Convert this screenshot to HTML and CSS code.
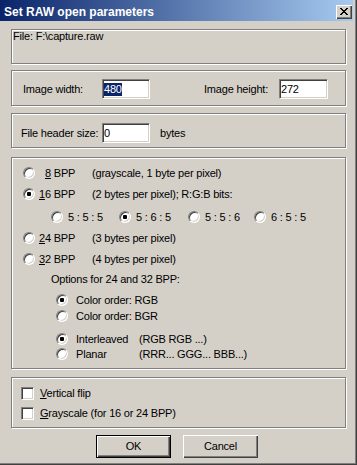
FILE: index.html
```html
<!DOCTYPE html>
<html>
<head>
<meta charset="utf-8">
<link rel="stylesheet" href="styles.css">
</head>
<body>
<div class="window">
  <div class="titlebar">
    <span class="title">Set RAW open parameters</span>
    <span class="close"><svg width="8" height="7" viewBox="0 0 8 7" shape-rendering="crispEdges"><path fill="#000" d="M0 0h2v1H0z M6 0h2v1H6z M1 1h2v1H1z M5 1h2v1H5z M2 2h4v1H2z M3 3h2v1H3z M2 4h4v1H2z M1 5h2v1H1z M5 5h2v1H5z M0 6h2v1H0z M6 6h2v1H6z"/></svg></span>
  </div>

  <div class="group g-file"><span>File: F:\capture.raw</span></div>

  <div class="group g-size">
    <span class="lbl lbl-w">Image width:</span>
    <span class="field"><span class="sel">480</span></span>
    <span class="lbl lbl-h">Image height:</span>
    <span class="field field-h">272</span>
  </div>

  <div class="group g-header">
    <span class="lbl lbl-hdr">File header size:</span>
    <span class="field">0</span>
    <span class="lbl unit">bytes</span>
  </div>

  <div class="group g-bpp">
    <div class="row main"><span class="radio"></span><span class="rl"><span class="pad-digit"><u>8</u> BPP</span></span><span>(grayscale, 1 byte per pixel)</span></div>
    <div class="row main mt7"><span class="radio on"></span><span class="rl"><u>1</u>6 BPP</span><span>(2 bytes per pixel); R:G:B bits:</span></div>
    <div class="row sub mt9">
      <span class="opt w68"><span class="radio"></span>5 : 5 : 5</span>
      <span class="opt w69"><span class="radio on"></span>5 : 6 : 5</span>
      <span class="opt w66"><span class="radio"></span>5 : 5 : 6</span>
      <span class="opt"><span class="radio"></span>6 : 5 : 5</span>
    </div>
    <div class="row main mt7"><span class="radio"></span><span class="rl"><u>2</u>4 BPP</span><span>(3 bytes per pixel)</span></div>
    <div class="row main mt7"><span class="radio"></span><span class="rl"><u>3</u>2 BPP</span><span>(4 bytes per pixel)</span></div>
    <div class="row note mt6">Options for 24 and 32 BPP:</div>
    <div class="row order mt7"><span class="radio on"></span><span>Color order: RGB</span></div>
    <div class="row order mt2"><span class="radio"></span><span>Color order: BGR</span></div>
    <div class="row order mt9"><span class="radio on"></span><span class="ol">Interleaved</span><span>(RGB RGB ...)</span></div>
    <div class="row order mt1"><span class="radio"></span><span class="ol">Planar</span><span>(RRR... GGG... BBB...)</span></div>
  </div>

  <div class="group g-flags">
    <div class="crow"><span class="check"></span><span><u>V</u>ertical flip</span></div>
    <div class="crow mt7"><span class="check"></span><span><u>G</u>rayscale (for 16 or 24 BPP)</span></div>
  </div>

  <div class="buttons">
    <span class="btn btn-default">OK</span>
    <span class="btn">Cancel</span>
  </div>
</div>
</body>
</html>
```

FILE: styles.css
```css
html, body {
  margin: 0;
  padding: 0;
  background: #d4d0c8;
  overflow: hidden;
}

.window {
  width: 357px;
  height: 465px;
  box-sizing: border-box;
  padding-right: 4px;
  background: #d4d0c8;
  box-shadow: inset -1px -1px 0 #404040, inset -2px -2px 0 #808080;
  font-family: "Liberation Sans", Arial, sans-serif;
  font-size: 11px;
  line-height: 13px;
  letter-spacing: -0.2px;
  color: #000;
}

.titlebar {
  display: flex;
  align-items: flex-start;
  height: 21px;
  background: linear-gradient(to right, #0a246a, #a6caf0);
}

.title {
  padding: 2px 0 0 4px;
  font-weight: bold;
  font-size: 12px;
  line-height: 20px;
  letter-spacing: 0;
  color: #fff;
  white-space: nowrap;
}

.close {
  margin: 5px 1px 0 auto;
  width: 16px;
  height: 14px;
  box-sizing: border-box;
  display: flex;
  padding: 3px 0 0 4px;
  background: #d4d0c8;
  box-shadow: inset 1px 1px 0 #fff, inset -1px -1px 0 #404040, inset -2px -2px 0 #808080;
}

.close svg {
  display: block;
}

.group {
  box-sizing: border-box;
  width: 335px;
  margin-left: 11px;
  border: 1px solid #808080;
  box-shadow: inset 1px 1px 0 #fff, 1px 1px 0 #fff;
}

.g-file {
  margin-top: 8px;
  height: 35px;
  padding-left: 1px;
  white-space: nowrap;
}

.g-size {
  margin-top: 6px;
  height: 36px;
  padding: 8px 0 0 11px;
  display: flex;
  align-items: flex-start;
}

.g-header {
  margin-top: 7px;
  height: 35px;
  padding: 9px 0 0 9px;
  display: flex;
  align-items: flex-start;
}

.lbl {
  height: 20px;
  line-height: 20px;
  white-space: nowrap;
}

.lbl-w { width: 79px; }
.lbl-h { width: 75px; margin-left: 54px; }
.lbl-hdr { width: 81px; }
.unit { margin-left: 10px; }

.field {
  box-sizing: border-box;
  width: 48px;
  height: 20px;
  padding-left: 1px;
  line-height: 18px;
  background: #fff;
  border: 1px solid;
  border-color: #808080 #fff #fff #808080;
  box-shadow: inset 1px 1px 0 #404040, inset -1px -1px 0 #d4d0c8;
  display: flex;
  align-items: center;
}

.field-h { width: 49px; }

.sel {
  background: #0a246a;
  color: #fff;
  line-height: 13px;
}

.g-bpp {
  margin-top: 9px;
  height: 212px;
  padding: 8px 0 0 11px;
}

.row {
  display: flex;
  align-items: center;
  height: 14px;
  line-height: 14px;
  white-space: nowrap;
}

.radio {
  flex: none;
  position: relative;
  width: 12px;
  height: 12px;
  box-sizing: border-box;
  border-radius: 50%;
  background: #fff;
  border: 1px solid;
  border-color: #808080 #fff #fff #808080;
  box-shadow: inset 1px 1px 0 #404040, inset -1px -1px 0 #d4d0c8;
}

.radio.on::after {
  content: "";
  position: absolute;
  left: 3px;
  top: 3px;
  width: 4px;
  height: 4px;
  border-radius: 1px;
  background: #000;
}

.main .radio { margin-right: 4px; }
.rl { width: 53px; }
.pad-digit { padding-left: 6px; }

.sub { padding-left: 28px; }
.opt { display: flex; align-items: center; }
.opt .radio { margin-right: 5px; }
.w68 { width: 68px; }
.w69 { width: 69px; }
.w66 { width: 66px; }

.note { padding-left: 28px; }

.order { padding-left: 33px; }
.order .radio { margin-right: 8px; }
.ol { width: 63px; }

u {
  text-decoration: underline;
  text-underline-offset: 1px;
}

.mt1 { margin-top: 1px; }
.mt2 { margin-top: 2px; }
.mt6 { margin-top: 6px; }
.mt7 { margin-top: 7px; }
.mt9 { margin-top: 9px; }

.g-flags {
  margin-top: 8px;
  height: 51px;
  padding: 9px 0 0 9px;
}

.crow {
  display: flex;
  align-items: center;
  height: 13px;
  line-height: 13px;
  white-space: nowrap;
}

.check {
  flex: none;
  width: 13px;
  height: 13px;
  box-sizing: border-box;
  margin-right: 6px;
  background: #fff;
  border: 1px solid;
  border-color: #808080 #fff #fff #808080;
  box-shadow: inset 1px 1px 0 #404040, inset -1px -1px 0 #d4d0c8;
}

.buttons {
  display: flex;
  gap: 12px;
  margin-top: 7px;
  padding-left: 96px;
}

.btn {
  box-sizing: border-box;
  width: 75px;
  height: 23px;
  display: flex;
  align-items: center;
  justify-content: center;
  background: #d4d0c8;
  box-shadow: inset 1px 1px 0 #fff, inset -1px -1px 0 #404040, inset -2px -2px 0 #808080;
}

.btn-default {
  border: 1px solid #000;
}
```
